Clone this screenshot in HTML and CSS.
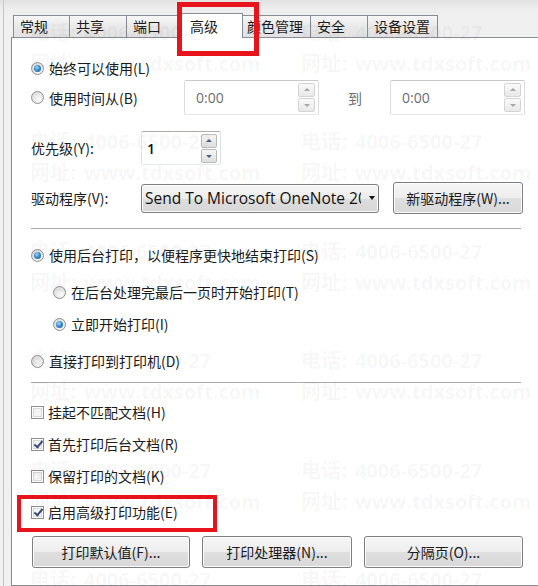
FILE: index.html
```html
<!DOCTYPE html>
<html lang="zh-CN">
<head>
<meta charset="utf-8">
<title>打印机属性 - 高级</title>
<link rel="stylesheet" href="styles.css">
</head>
<body>
<div class="screen">
  <div class="frame">
    <div class="tabs">
      <div class="tab first">常规</div>
      <div class="tab">共享</div>
      <div class="tab">端口</div>
      <div class="tab active">高级<span class="mark mark-tab"></span></div>
      <div class="tab">颜色管理</div>
      <div class="tab">安全</div>
      <div class="tab">设备设置</div>
    </div>
    <div class="panel">
      <div class="row opt-always"><span class="radio on"></span><span class="txt">始终可以使用(L)</span></div>

      <div class="row time-row">
        <div class="time-label"><span class="radio"></span><span class="txt">使用时间从(B)</span></div>
        <div class="spin spin-time disabled"><span class="val">0:00</span><span class="arrows"><span class="arr up"></span><span class="arr down"></span></span></div>
        <span class="to">到</span>
        <div class="spin spin-time disabled"><span class="val">0:00</span><span class="arrows"><span class="arr up"></span><span class="arr down"></span></span></div>
      </div>

      <div class="row priority-row">
        <span class="field-label">优先级(Y):</span>
        <div class="spin spin-prio"><span class="val">1</span><span class="arrows"><span class="arr up"></span><span class="arr down"></span></span></div>
      </div>

      <div class="row driver-row">
        <span class="field-label">驱动程序(V):</span>
        <div class="combo"><span class="combo-text">Send To Microsoft OneNote 2010 Driver</span><span class="combo-arrow"></span></div>
        <div class="btn btn-new">新驱动程序(W)...</div>
      </div>

      <div class="sep sep-a"></div>

      <div class="row spool-row"><span class="radio on"></span><span class="txt">使用后台打印，以便程序更快地结束打印(S)</span></div>
      <div class="row sub-row sub-first"><span class="radio"></span><span class="txt">在后台处理完最后一页时开始打印(T)</span></div>
      <div class="row sub-row sub-second"><span class="radio on"></span><span class="txt">立即开始打印(I)</span></div>
      <div class="row direct-row"><span class="radio"></span><span class="txt">直接打印到打印机(D)</span></div>

      <div class="sep sep-b"></div>

      <div class="row chk-row chk-first"><span class="check"></span><span class="txt">挂起不匹配文档(H)</span></div>
      <div class="row chk-row chk-next"><span class="check on"></span><span class="txt">首先打印后台文档(R)</span></div>
      <div class="row chk-row chk-next"><span class="check"></span><span class="txt">保留打印的文档(K)</span></div>
      <div class="row chk-row chk-last"><span class="check on"></span><span class="txt">启用高级打印功能(E)</span><span class="mark mark-chk"></span></div>

      <div class="btn-row">
        <div class="btn btn-def">打印默认值(F)...</div>
        <div class="btn btn-proc">打印处理器(N)...</div>
        <div class="btn btn-sep">分隔页(O)...</div>
      </div>
    </div>
  </div>

  <div class="watermark">
    <div class="wm-col wm-left">
      <div class="wm-group"><div class="wm-line"><span class="wm-pre">电话:</span>4006-6500-27</div><div class="wm-line"><span class="wm-pre">网址:</span>www.tdxsoft.com</div></div>
      <div class="wm-group"><div class="wm-line"><span class="wm-pre">电话:</span>4006-6500-27</div><div class="wm-line"><span class="wm-pre">网址:</span>www.tdxsoft.com</div></div>
      <div class="wm-group"><div class="wm-line"><span class="wm-pre">电话:</span>4006-6500-27</div><div class="wm-line"><span class="wm-pre">网址:</span>www.tdxsoft.com</div></div>
      <div class="wm-group"><div class="wm-line"><span class="wm-pre">电话:</span>4006-6500-27</div><div class="wm-line"><span class="wm-pre">网址:</span>www.tdxsoft.com</div></div>
      <div class="wm-group"><div class="wm-line"><span class="wm-pre">电话:</span>4006-6500-27</div><div class="wm-line"><span class="wm-pre">网址:</span>www.tdxsoft.com</div></div>
      <div class="wm-group"><div class="wm-line"><span class="wm-pre">电话:</span>4006-6500-27</div><div class="wm-line"><span class="wm-pre">网址:</span>www.tdxsoft.com</div></div>
    </div>
    <div class="wm-col wm-right">
      <div class="wm-group"><div class="wm-line"><span class="wm-pre">电话:</span>4006-6500-27</div><div class="wm-line"><span class="wm-pre">网址:</span>www.tdxsoft.com</div></div>
      <div class="wm-group"><div class="wm-line"><span class="wm-pre">电话:</span>4006-6500-27</div><div class="wm-line"><span class="wm-pre">网址:</span>www.tdxsoft.com</div></div>
      <div class="wm-group"><div class="wm-line"><span class="wm-pre">电话:</span>4006-6500-27</div><div class="wm-line"><span class="wm-pre">网址:</span>www.tdxsoft.com</div></div>
      <div class="wm-group"><div class="wm-line"><span class="wm-pre">电话:</span>4006-6500-27</div><div class="wm-line"><span class="wm-pre">网址:</span>www.tdxsoft.com</div></div>
      <div class="wm-group"><div class="wm-line"><span class="wm-pre">电话:</span>4006-6500-27</div><div class="wm-line"><span class="wm-pre">网址:</span>www.tdxsoft.com</div></div>
      <div class="wm-group"><div class="wm-line"><span class="wm-pre">电话:</span>4006-6500-27</div><div class="wm-line"><span class="wm-pre">网址:</span>www.tdxsoft.com</div></div>
    </div>
  </div>
</div>
</body>
</html>
```

FILE: styles.css
```css
html, body {
  margin: 0;
  padding: 0;
}
body {
  background: #f0f0f0;
  font-family: "Noto Sans CJK SC", "Noto Sans", sans-serif;
  font-size: 14px;
  color: #1b1b1b;
}
.screen {
  position: relative;
  width: 538px;
  height: 586px;
  overflow: hidden;
  background: linear-gradient(#e2e2e2 0px, #ececec 8px, #f0f0f0 15px);
}
.frame {
  margin-left: 3px;
  border-left: 1px solid #c6c6c6;
  height: 100%;
  box-sizing: border-box;
  padding-top: 15px;
  display: flex;
  flex-direction: column;
}

/* ---------- tabs ---------- */
.tabs {
  display: flex;
  align-items: flex-end;
  height: 22px;
  padding-left: 9px;
  position: relative;
  z-index: 2;
}
.tab {
  position: relative;
  box-sizing: border-box;
  height: 22px;
  min-width: 58px;
  padding: 0 7px 0 6px;
  margin-right: -1px;
  border: 1px solid #898c95;
  border-bottom: none;
  background: linear-gradient(#f7f7f7, #e9e9e9 50%, #e2e2e2);
  line-height: 21px;
  white-space: nowrap;
}
.tab.first {
  min-width: 57px;
}
.tab.active {
  height: 25px;
  width: 62px;
  margin: 0 -3px -1px -2px;
  padding-left: 8px;
  background: #fff;
  line-height: 24px;
  z-index: 3;
}

/* ---------- panel ---------- */
.panel {
  flex: 1;
  margin-left: 7px;
  background: #fff;
  border: 1px solid #898c95;
  border-right: none;
  padding: 19px 0 0 19px;
  display: flex;
  flex-direction: column;
  position: relative;
  z-index: 1;
}
.row {
  display: flex;
  align-items: center;
  height: 22px;
  white-space: nowrap;
  position: relative;
}
.txt {
  margin-left: 5px;
}

/* radio */
.radio {
  position: relative;
  box-sizing: border-box;
  width: 13px;
  height: 13px;
  flex: none;
  border-radius: 50%;
  border: 1px solid #8f8f8f;
  background: radial-gradient(circle at 65% 70%, #fafafa 0, #e6e6e6 55%, #d2d2d2 100%);
}
.radio.on::after {
  content: "";
  position: absolute;
  left: 2px;
  top: 2px;
  width: 7px;
  height: 7px;
  border-radius: 50%;
  background: radial-gradient(circle at 40% 35%, #a8dcfb 0, #3a8fd0 45%, #174f8c 100%);
}

/* checkbox */
.check {
  position: relative;
  box-sizing: border-box;
  width: 13px;
  height: 13px;
  flex: none;
  border: 1px solid #8f8f8f;
  background: #f4f4f4;
  box-shadow: inset 0 0 0 1px #fff, inset 0 0 0 2px #d8d8d8;
}
.check.on::after {
  content: "";
  position: absolute;
  left: 3.5px;
  top: 0px;
  width: 3px;
  height: 7px;
  border-right: 2px solid #3b4a78;
  border-bottom: 2px solid #3b4a78;
  transform: rotate(40deg);
}

/* rows */
.time-row {
  margin-top: 1px;
  height: 35px;
}
.time-label {
  display: flex;
  align-items: center;
  width: 153px;
  flex: none;
}
.to {
  width: 71px;
  text-align: center;
  color: #6d6d6d;
  padding-left: 1px;
  box-sizing: border-box;
}
.priority-row {
  margin-top: 15px;
  height: 35px;
}
.field-label {
  width: 110px;
  flex: none;
}
.driver-row {
  margin-top: 17px;
  height: 32px;
}

/* spin box */
.spin {
  position: relative;
  box-sizing: border-box;
  display: flex;
  align-items: center;
  background: #fff;
  border: 1px solid #abadb3;
  border-color: #abadb3 #dbdfe6 #e3e9ef #e2e3ea;
  border-radius: 2px;
}
.spin.disabled {
  border-color: #c9c9c9 #dcdcdc #e4e4e4 #dcdcdc;
}
.spin-time {
  width: 135px;
  height: 35px;
}
.spin-prio {
  width: 80px;
  height: 34px;
  margin-top: 1px;
}
.spin .val {
  flex: 1;
  padding-left: 11px;
  font-family: "Open Sans", "Noto Sans", sans-serif;
  font-size: 14px;
  color: #6e6e6e;
}
.spin-prio .val {
  padding-left: 5px;
  color: #111;
  font-weight: 600;
}
.arrows {
  display: flex;
  flex-direction: column;
  margin-right: 3px;
  gap: 1px;
}
.arr {
  position: relative;
  box-sizing: border-box;
  width: 17px;
  height: 14px;
  border: 1px solid #d4d4d4;
  border-radius: 2px;
  background: linear-gradient(#fafafa, #e8e8e8);
}
.spin-prio .arr {
  width: 16px;
  height: 14px;
  border-color: #b9b9b9;
  background: linear-gradient(#f6f6f6, #dedede);
}
.spin-prio .arrows {
  margin-right: 3px;
}
.arr::after {
  content: "";
  position: absolute;
  left: 50%;
  top: 50%;
  margin-left: -3px;
  border-left: 3px solid transparent;
  border-right: 3px solid transparent;
}
.arr.up::after {
  margin-top: -2px;
  border-bottom: 3px solid #a6a6a6;
}
.arr.down::after {
  margin-top: -1px;
  border-top: 3px solid #a6a6a6;
}
.spin-prio .arr.up::after {
  border-bottom-color: #4d6185;
}
.spin-prio .arr.down::after {
  border-top-color: #4d6185;
}

/* combo + buttons */
.combo {
  box-sizing: border-box;
  width: 238px;
  height: 29px;
  display: flex;
  align-items: center;
  border: 1px solid #7e7e7e;
  border-radius: 3px;
  background: linear-gradient(#f5f5f5, #ececec 50%, #dedede 51%, #d6d6d6);
  box-shadow: inset 0 0 0 1px #fbfbfb;
}
.combo-text {
  width: 216px;
  overflow: hidden;
  padding-left: 3px;
  font-family: "Open Sans", "Noto Sans", sans-serif;
  font-size: 15.5px;
  color: #111;
}
.combo-arrow {
  margin-left: 8px;
  width: 0;
  height: 0;
  border-left: 3.5px solid transparent;
  border-right: 3.5px solid transparent;
  border-top: 4px solid #111;
}
.btn {
  box-sizing: border-box;
  height: 32px;
  display: flex;
  align-items: center;
  justify-content: center;
  border: 1px solid #7e7e7e;
  border-radius: 3px;
  background: linear-gradient(#f6f6f6, #ededed 50%, #dfdfdf 51%, #d8d8d8);
  box-shadow: inset 0 0 0 1px #fcfcfc;
  white-space: nowrap;
}
.btn-new {
  width: 130px;
  margin-left: 14px;
}

/* separators */
.sep {
  width: 490px;
  border-top: 1px solid #ababab;
}
.sep-a {
  margin-top: 14px;
}
.sep-b {
  margin-top: 10px;
}
.spool-row {
  margin-top: 15px;
}
.sub-row {
  padding-left: 22px;
}
.sub-first {
  margin-top: 15px;
}
.sub-second {
  margin-top: 10px;
}
.direct-row {
  margin-top: 15px;
}
.chk-first {
  margin-top: 18px;
}
.chk-next {
  margin-top: 10px;
}
.chk-row .txt {
  margin-left: 4px;
}
.chk-last {
  margin-top: 14px;
}

.btn-row {
  display: flex;
  margin-top: 13px;
  margin-left: 1px;
}
.btn-def {
  width: 158px;
}
.btn-proc {
  width: 150px;
  margin-left: 12px;
}
.btn-sep {
  width: 159px;
  margin-left: 12px;
}

/* red annotation boxes */
.mark {
  position: absolute;
  box-sizing: border-box;
  border: 4px solid #e8141b;
  pointer-events: none;
}
.mark-tab {
  left: -5px;
  top: -12px;
  width: 82px;
  height: 54px;
  border-width: 5px;
}
.mark-chk {
  left: -14px;
  top: -6px;
  width: 200px;
  height: 37px;
}

/* watermark */
.watermark {
  position: absolute;
  left: 0;
  top: 0;
  width: 538px;
  height: 586px;
  pointer-events: none;
  z-index: 5;
}
.wm-col {
  position: absolute;
  top: 15.5px;
}
.wm-left {
  left: 30px;
}
.wm-right {
  left: 301px;
}
.wm-group {
  height: 109.5px;
}
.wm-line {
  height: 31px;
  line-height: 31px;
  font-family: "Open Sans", "Noto Sans CJK SC", sans-serif;
  font-weight: 700;
  font-size: 20px;
  color: rgba(0, 0, 0, 0.045);
  white-space: nowrap;
}
.wm-pre {
  display: inline-block;
  width: 54px;
  font-family: "Noto Sans CJK SC", sans-serif;
}
```
